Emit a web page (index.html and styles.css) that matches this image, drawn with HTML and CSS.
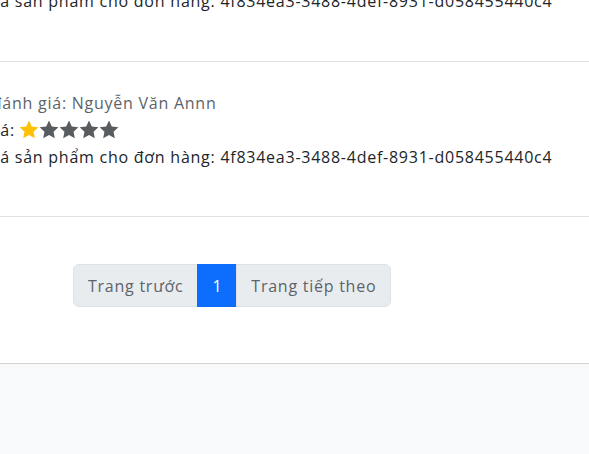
FILE: index.html
```html
<!DOCTYPE html>
<html lang="vi">
<head>
<meta charset="utf-8">
<title>Đánh giá</title>
<link rel="stylesheet" href="styles.css">
</head>
<body>
<main class="reviews">
  <div class="review review-first">
    <p class="line">Đánh giá sản phẩm cho đơn hàng: 4f834ea3-3488-4def-8931-d058455440c4</p>
  </div>
  <div class="review">
    <p class="line muted">Người đánh giá: Nguyễn Văn Annn</p>
    <p class="line stars-line">Đánh giá:
      <span class="stars">
        <svg class="star on" viewBox="1 1 22 22"><path d="M12 1.5l3.1 6.6 7.2.9-5.3 5 1.4 7.1L12 17.6l-6.4 3.5 1.4-7.1-5.3-5 7.2-.9z"/></svg><svg class="star" viewBox="1 1 22 22"><path d="M12 1.5l3.1 6.6 7.2.9-5.3 5 1.4 7.1L12 17.6l-6.4 3.5 1.4-7.1-5.3-5 7.2-.9z"/></svg><svg class="star" viewBox="1 1 22 22"><path d="M12 1.5l3.1 6.6 7.2.9-5.3 5 1.4 7.1L12 17.6l-6.4 3.5 1.4-7.1-5.3-5 7.2-.9z"/></svg><svg class="star" viewBox="1 1 22 22"><path d="M12 1.5l3.1 6.6 7.2.9-5.3 5 1.4 7.1L12 17.6l-6.4 3.5 1.4-7.1-5.3-5 7.2-.9z"/></svg><svg class="star" viewBox="1 1 22 22"><path d="M12 1.5l3.1 6.6 7.2.9-5.3 5 1.4 7.1L12 17.6l-6.4 3.5 1.4-7.1-5.3-5 7.2-.9z"/></svg>
      </span>
    </p>
    <p class="line">Đánh giá sản phẩm cho đơn hàng: 4f834ea3-3488-4def-8931-d058455440c4</p>
  </div>
</main>
<nav class="pager-wrap">
  <ul class="pager">
    <li class="page-item"><a class="page-link">Trang trước</a></li>
    <li class="page-item active"><a class="page-link">1</a></li>
    <li class="page-item"><a class="page-link">Trang tiếp theo</a></li>
  </ul>
</nav>
<footer class="footer"></footer>
</body>
</html>
```
FILE: styles.css
```css
html, body {
  margin: 0;
  padding: 0;
  background: #ffffff;
  font-family: "Open Sans", "Noto Sans", sans-serif;
  font-size: 16px;
  letter-spacing: 0.75px;
  color: #212529;
}
.reviews {
  margin-left: -62px;
}
.review {
  padding: 29px 0 47px;
  border-bottom: 1px solid #dee2e6;
}
.review-first {
  padding-top: 0;
  margin-top: -11px;
  padding-bottom: 48px;
}
.line {
  margin: 0;
  line-height: 24px;
  white-space: nowrap;
}
.muted {
  color: #5c636a;
}
.stars-line {
  line-height: 30px;
  display: flex;
  align-items: center;
  gap: 4px;
}
.stars {
  display: inline-flex;
  align-items: center;
}
.star {
  width: 20px;
  height: 20px;
  fill: #595c5f;
}
.star.on {
  fill: #ffc107;
}
.pager-wrap {
  padding: 47px 0 56px 73px;
  border-bottom: 1px solid #d2d2d2;
}
.pager {
  list-style: none;
  margin: 0;
  padding: 0;
  display: flex;
}
.page-link {
  display: block;
  padding: 9px 14px 8px;
  line-height: 24px;
  background: #e9ecef;
  color: #5c636a;
  border: 1px solid #dee2e6;
  margin-left: -1px;
}
.page-item:first-child .page-link {
  border-radius: 6px 0 0 6px;
  margin-left: 0;
}
.page-item:last-child .page-link {
  border-radius: 0 6px 6px 0;
}
.active .page-link {
  background: #0d6efd;
  border-color: #0d6efd;
  color: #ffffff;
}
.footer {
  background: #f8f9fa;
  height: 100px;
}
```
